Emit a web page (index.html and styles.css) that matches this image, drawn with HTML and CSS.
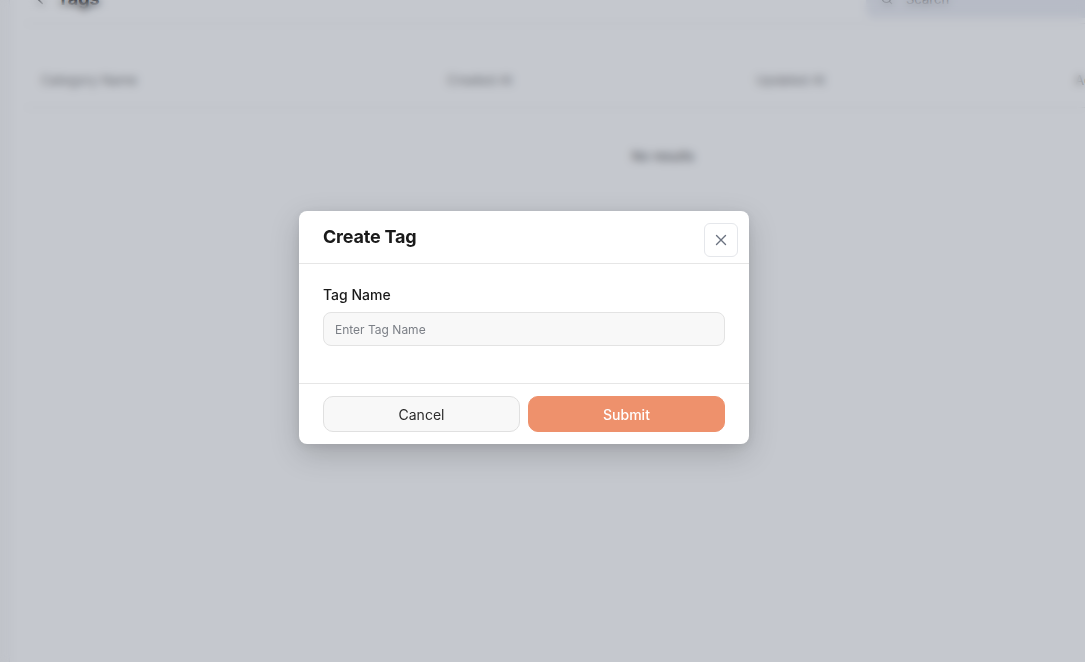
FILE: index.html
```html
<!DOCTYPE html>
<html lang="en">
<head>
<meta charset="utf-8">
<title>Tags</title>
<link rel="stylesheet" href="styles.css">
</head>
<body>
<div class="page">
  <aside class="rail"></aside>
  <main class="main">
    <header class="topbar">
      <div class="title">
        <svg class="back" viewBox="0 0 24 24" width="18" height="18"><path d="M15 6l-6 6 6 6" fill="none" stroke="#333" stroke-width="2" stroke-linecap="round" stroke-linejoin="round"/></svg>
        <span>Tags</span>
      </div>
      <div class="search">
        <svg viewBox="0 0 24 24" width="14" height="14"><circle cx="11" cy="11" r="7" fill="none" stroke="#777" stroke-width="2"/><path d="M20 20l-4-4" stroke="#777" stroke-width="2" stroke-linecap="round"/></svg>
        <span>Search</span>
      </div>
    </header>
    <section class="table">
      <div class="thead">
        <div>Category Name</div>
        <div>Created At</div>
        <div>Updated At</div>
        <div>Actions</div>
      </div>
      <div class="empty">No results</div>
    </section>
  </main>
</div>

<div class="overlay">
  <div class="modal">
    <div class="modal-head">
      <h2>Create Tag</h2>
      <button class="close" aria-label="Close">
        <svg viewBox="0 0 16 16" width="16" height="16"><path d="M3.5 3.5l9 9M12.5 3.5l-9 9" stroke="#6b7280" stroke-width="1.4" stroke-linecap="round"/></svg>
      </button>
    </div>
    <div class="modal-body">
      <label class="label" for="tag">Tag Name</label>
      <input id="tag" class="input" type="text" placeholder="Enter Tag Name">
    </div>
    <div class="modal-foot">
      <button class="btn btn-cancel">Cancel</button>
      <button class="btn btn-submit">Submit</button>
    </div>
  </div>
</div>
</body>
</html>
```

FILE: styles.css
```css
* { box-sizing: border-box; }
html, body { margin: 0; padding: 0; height: 100%; overflow: hidden; }
body {
  font-family: "Inter", "Noto Sans", sans-serif;
  background: #ffffff;
  color: #222;
}
.page {
  display: flex;
  height: 100%;
  width: 1400px;
}
.rail {
  width: 10px;
  border-right: 1px solid #eceef1;
  background: #fafafa;
}
.main {
  flex: 1;
  padding: 0 0 0 15px;
  margin-top: -26px;
}
.topbar {
  display: flex;
  align-items: center;
  justify-content: space-between;
  height: 50px;
  border-bottom: 1px solid #eeeeee;
}
.title {
  display: flex;
  align-items: center;
  gap: 8px;
  padding-left: 6px;
  font-size: 18px;
  font-weight: 700;
}
.search {
  width: 510px;
  height: 38px;
  border-radius: 8px;
  background: #eceef4;
  display: flex;
  align-items: center;
  gap: 12px;
  padding-left: 14px;
  font-size: 13px;
  color: #888;
  margin-right: 24px;
}
.table { margin-top: 28px; width: 1276px; }
.thead {
  display: grid;
  grid-template-columns: 406px 309px 319px 1fr;
  border-bottom: 1px solid #eeeeee;
  height: 56px;
  align-items: center;
  font-size: 13px;
  color: #888;
}
.thead div { padding-left: 16px; }
.empty {
  text-align: center;
  font-size: 13px;
  color: #555;
  padding: 40px 0;
}

.overlay {
  position: fixed;
  inset: 0;
  background: rgba(32, 44, 66, 0.26);
  backdrop-filter: blur(4px);
  display: flex;
  align-items: center;
  justify-content: center;
  padding-right: 37px;
  padding-bottom: 7px;
}
.modal {
  width: 450px;
  background: #ffffff;
  border-radius: 8px;
  box-shadow: 0 10px 30px rgba(0, 0, 0, 0.18), 0 2px 8px rgba(0, 0, 0, 0.08);
}
.modal-head {
  height: 53px;
  display: flex;
  align-items: flex-start;
  justify-content: space-between;
  padding: 0 11px 0 24px;
  border-bottom: 1px solid #e6e6e6;
}
.modal-head h2 {
  margin: 0;
  line-height: 52px;
  font-size: 18px;
  font-weight: 700;
  color: #1a1a1a;
  letter-spacing: -0.2px;
}
.close {
  margin-top: 12px;
  width: 34px;
  height: 34px;
  border: 1px solid #e5e7eb;
  border-radius: 6px;
  background: #fff;
  display: flex;
  align-items: center;
  justify-content: center;
  padding: 0;
}
.modal-body {
  display: flex;
  flex-direction: column;
  padding: 22px 24px 37px;
  border-bottom: 1px solid #e6e6e6;
}
.label {
  font-size: 14px;
  font-weight: 500;
  color: #1a1a1a;
  line-height: 18px;
  margin-bottom: 8px;
}
.input {
  height: 34px;
  border: 1px solid #e3e3e3;
  border-radius: 8px;
  background: #f8f8f8;
  padding: 0 11px;
  font-family: inherit;
  font-size: 12px;
  color: #333;
  outline: none;
}
.input::placeholder { color: #7b7f86; }
.modal-foot {
  display: flex;
  gap: 8px;
  padding: 12px 24px;
}
.btn {
  flex: 1;
  height: 36px;
  border-radius: 10px;
  font-family: inherit;
  font-size: 14px;
}
.btn-cancel {
  background: #f8f8f8;
  border: 1px solid #e0e0e0;
  color: #2b2b2b;
}
.btn-submit {
  background: #ee916c;
  border: 1px solid #ee916c;
  color: #ffffff;
  font-weight: 500;
}
```
